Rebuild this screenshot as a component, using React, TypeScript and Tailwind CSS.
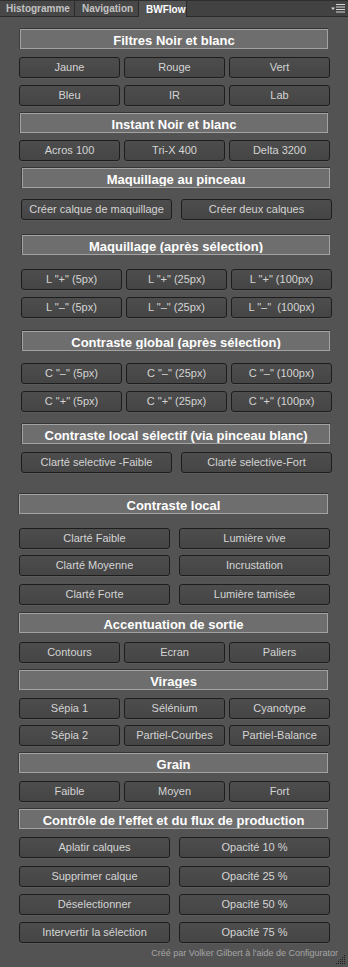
import React from "react";

type Row = { mt: string; cls: string; items: string[] };
type Section = { title: string; hcls: string; hmt: string; low?: boolean; rows: Row[] };

const R3_19 = "ml-[19px] w-[311px] grid grid-cols-3 gap-x-[4px]";
const R3_21 = "ml-[21px] w-[311px] grid grid-cols-3 gap-x-[4px]";
const R2_21 = "ml-[21px] w-[311px] grid grid-cols-2 gap-x-[9px]";
const R2_19 = "ml-[19px] w-[311px] grid grid-cols-2 gap-x-[9px]";

const sections: Section[] = [
  {
    title: "Filtres Noir et blanc",
    hcls: "ml-[20px] w-[308px]",
    hmt: "mt-[12px]",
    rows: [
      { mt: "mt-[8px]", cls: R3_19, items: ["Jaune", "Rouge", "Vert"] },
      { mt: "mt-[7px]", cls: R3_19, items: ["Bleu", "IR", "Lab"] },
    ],
  },
  {
    title: "Instant Noir et blanc",
    hcls: "ml-[20px] w-[308px]",
    hmt: "mt-[7px]",
    rows: [{ mt: "mt-[7px]", cls: R3_19, items: ["Acros 100", "Tri-X 400", "Delta 3200"] }],
  },
  {
    title: "Maquillage au pinceau",
    hcls: "ml-[22px] w-[308px]",
    hmt: "mt-[7px]",
    low: true,
    rows: [{ mt: "mt-[11px]", cls: R2_21, items: ["Créer calque de maquillage", "Créer deux calques"] }],
  },
  {
    title: "Maquillage (après sélection)",
    hcls: "ml-[22px] w-[308px]",
    hmt: "mt-[15px]",
    low: true,
    rows: [
      { mt: "mt-[14px]", cls: R3_21, items: ['L "+" (5px)', 'L "+" (25px)', 'L "+" (100px)'] },
      { mt: "mt-[7px]", cls: R3_21, items: ['L "–" (5px)', 'L "–" (25px)', 'L "–"  (100px)'] },
    ],
  },
  {
    title: "Contraste global (après sélection)",
    hcls: "ml-[22px] w-[308px]",
    hmt: "mt-[13px]",
    low: true,
    rows: [
      { mt: "mt-[12px]", cls: R3_21, items: ['C "–" (5px)', 'C "–" (25px)', 'C "–" (100px)'] },
      { mt: "mt-[7px]", cls: R3_21, items: ['C "+" (5px)', 'C "+" (25px)', 'C "+" (100px)'] },
    ],
  },
  {
    title: "Contraste local sélectif (via pinceau blanc)",
    hcls: "ml-[22px] w-[308px]",
    hmt: "mt-[12px]",
    rows: [{ mt: "mt-[8px]", cls: R2_21, items: ["Clarté selective -Faible", "Clarté selective-Fort"] }],
  },
  {
    title: "Contraste local",
    hcls: "ml-[19px] w-[309px]",
    hmt: "mt-[21px]",
    rows: [
      { mt: "mt-[14px]", cls: R2_19, items: ["Clarté Faible", "Lumière vive"] },
      { mt: "mt-[6px]", cls: R2_19, items: ["Clarté Moyenne", "Incrustation"] },
      { mt: "mt-[8px]", cls: R2_19, items: ["Clarté Forte", "Lumière tamisée"] },
    ],
  },
  {
    title: "Accentuation de sortie",
    hcls: "ml-[19px] w-[309px]",
    hmt: "mt-[8px]",
    rows: [{ mt: "mt-[9px]", cls: R3_19, items: ["Contours", "Ecran", "Paliers"] }],
  },
  {
    title: "Virages",
    hcls: "ml-[19px] w-[309px]",
    hmt: "mt-[7px]",
    low: true,
    rows: [
      { mt: "mt-[8px]", cls: R3_19, items: ["Sépia 1", "Sélénium", "Cyanotype"] },
      { mt: "mt-[6px]", cls: R3_19, items: ["Sépia 2", "Partiel-Courbes", "Partiel-Balance"] },
    ],
  },
  {
    title: "Grain",
    hcls: "ml-[19px] w-[309px]",
    hmt: "mt-[7px]",
    rows: [{ mt: "mt-[8px]", cls: R3_19, items: ["Faible", "Moyen", "Fort"] }],
  },
  {
    title: "Contrôle de l'effet et du flux de production",
    hcls: "ml-[19px] w-[309px]",
    hmt: "mt-[7px]",
    rows: [
      { mt: "mt-[8px]", cls: R2_19, items: ["Aplatir calques", "Opacité 10 %"] },
      { mt: "mt-[8px]", cls: R2_19, items: ["Supprimer calque", "Opacité 25 %"] },
      { mt: "mt-[7px]", cls: R2_19, items: ["Déselectionner", "Opacité 50 %"] },
      { mt: "mt-[7px]", cls: R2_19, items: ["Intervertir la sélection", "Opacité 75 %"] },
    ],
  },
];

function Header({ title, cls, mt, low }: { title: string; cls: string; mt: string; low?: boolean }) {
  return (
    <div
      className={`${cls} ${mt} h-[20px] border border-[#a2a2a2] bg-[#6e6e6e] shadow-[0_-1px_0_#353535,-1px_0_0_#3d3d3d]`}
    >
      <div className={low ? "h-[17px] overflow-hidden" : "h-full"}>
        <div className="pt-[2.5px] text-center text-[13px] leading-[16px] font-bold text-white whitespace-nowrap">
          {title}
        </div>
      </div>
    </div>
  );
}

function Btn({ label }: { label: string }) {
  return (
    <div className="h-[21px] rounded-[3px] border border-[#1d1d1d] bg-linear-to-b from-[#4d4d4d] to-[#454545] shadow-[0_1px_0_rgba(255,255,255,0.05)] flex items-center justify-center text-[11px] text-[#d4d4d4] whitespace-pre">
      {label}
    </div>
  );
}

function Grip() {
  const dots: React.ReactElement[] = [];
  for (let r = 0; r < 5; r++) {
    for (let c = 0; c < 5; c++) {
      if (r + c >= 4) dots.push(<rect key={`${r}-${c}`} x={c * 2} y={r * 2} width="1" height="1" fill="#1e1e1e" />);
    }
  }
  return (
    <svg width="10" height="10" viewBox="0 0 10 10" className="absolute right-[2px] bottom-[2px]">
      {dots}
    </svg>
  );
}

export default function App() {
  return (
    <div className="relative w-[348px] h-[967px] bg-[#535353] overflow-hidden font-['Liberation_Sans',Arial,sans-serif] flex flex-col">
      {/* tab bar */}
      <div className="h-[17px] flex items-stretch bg-[#424242] border-t border-[#2e2e2e] shrink-0">
        <div className="w-[75px] bg-[#474747] border-r border-b border-[#2b2b2b] flex items-center pl-[6px] text-[10px] font-bold text-[#c2c2c2]">
          Histogramme
        </div>
        <div className="w-[64px] bg-[#474747] border-r border-b border-[#2b2b2b] flex items-center pl-[7px] text-[10px] font-bold text-[#c2c2c2]">
          Navigation
        </div>
        <div className="w-[48px] bg-[#535353] border-r border-[#2b2b2b] flex items-center pl-[7px] text-[10px] font-bold text-white">
          BWFlow
        </div>
        <div className="flex-1 border-b border-[#2b2b2b] flex items-center justify-end pr-[3px]">
          <svg width="14" height="9" viewBox="0 0 14 9">
            <path d="M0 3.5 L4 3.5 L2 6 Z" fill="#d6d6d6" />
            <rect x="5" y="0" width="9" height="1" fill="#d6d6d6" />
            <rect x="5" y="2.5" width="9" height="1" fill="#d6d6d6" />
            <rect x="5" y="5" width="9" height="1" fill="#d6d6d6" />
            <rect x="5" y="7.5" width="9" height="1" fill="#d6d6d6" />
          </svg>
        </div>
      </div>

      {sections.map((s) => (
        <React.Fragment key={s.title}>
          <Header title={s.title} cls={s.hcls} mt={s.hmt} low={s.low} />
          {s.rows.map((r, i) => (
            <div key={i} className={`${r.cls} ${r.mt}`}>
              {r.items.map((it) => (
                <Btn key={it} label={it} />
              ))}
            </div>
          ))}
        </React.Fragment>
      ))}

      <div className="mt-[5px] pr-[10px] text-right text-[9px] leading-[10px] text-[#a5a5a5] whitespace-nowrap">
        Créé par Volker Gilbert à l'aide de Configurator
      </div>
      <Grip />
    </div>
  );
}
